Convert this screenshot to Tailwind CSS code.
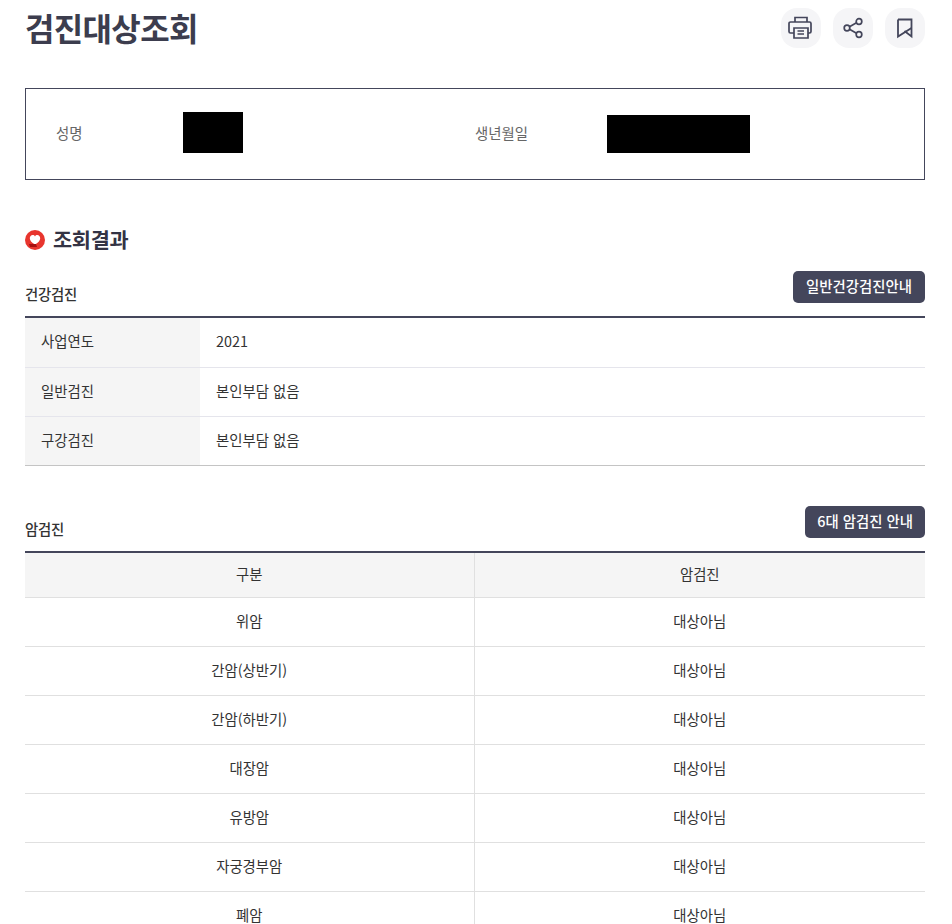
<!DOCTYPE html>
<html lang="ko">

<head>
    <meta charset="UTF-8">
    <meta name="viewport" content="width=device-width, initial-scale=1.0">
    <title>검진대상조회</title>
    <script src="https://cdn.jsdelivr.net/npm/@tailwindcss/browser@4"></script>
</head>

<body class="bg-white text-[#333] font-['Noto_Sans_CJK_KR','Noto_Sans',sans-serif] overflow-hidden h-[924px]">
    <div class="w-[900px] ml-[25px]">
        <!-- Title -->
        <div class="flex justify-between items-start h-[88px] pt-2">
            <h1 class="text-[32px] leading-[42px] -mt-[2px] font-bold tracking-[-0.65px] text-[#3c3d4e]">검진대상조회</h1>
            <div class="flex gap-3">
                <button class="w-10 h-10 rounded-2xl bg-[#f5f5f7] flex items-center justify-center">
                    <svg width="24" height="24" viewBox="0 0 24 24" fill="none" stroke="#44465b" stroke-width="1.7" class="-ml-[2px]">
                        <path d="M7 6V1.500h12V6" />
                        <path d="M6 17H2.500A1.500 1.500 0 0 1 1 15.500V7.500A1.500 1.500 0 0 1 2.500 6h19A1.500 1.500 0 0 1 23 7.500v8a1.500 1.500 0 0 1-1.500 1.500H20" />
                        <path d="M6 12h14v10H6z" />
                        <path d="M9.500 15H16M9.500 18H16" />
                    </svg>
                </button>
                <button class="w-10 h-10 rounded-2xl bg-[#f5f5f7] flex items-center justify-center">
                    <svg width="24" height="24" viewBox="0 0 24 24" fill="none" stroke="#44465b" stroke-width="1.7">
                        <circle cx="18" cy="5.500" r="2.800" />
                        <circle cx="6" cy="12" r="2.800" />
                        <circle cx="18" cy="18.500" r="2.800" />
                        <path d="M8.500 10.700l7-3.900M8.500 13.300l7 3.900" />
                    </svg>
                </button>
                <button class="w-10 h-10 rounded-2xl bg-[#f5f5f7] flex items-center justify-center">
                    <svg width="24" height="24" viewBox="0 0 24 24" fill="none" stroke="#44465b" stroke-width="1.800">
                        <path d="M5 3.500H18.500V20.500L11.500 15" />
                        <path d="M5 3.500V20.500L18.500 12" />
                    </svg>
                </button>
            </div>
        </div>

        <!-- Person info -->
        <div class="grid grid-cols-2 items-center h-[92px] pb-[4px] border border-[#44465b] text-[14.4px] text-[#666]">
            <div class="flex items-center pl-[30px]">
                <span class="w-[127px] mt-[1px]">성명</span>
                <div class="w-[60px] h-[41px] bg-black"></div>
            </div>
            <div class="flex items-center">
                <span class="w-[132px] mt-[1px]">생년월일</span>
                <div class="w-[143px] h-[38px] mt-[3px] bg-black"></div>
            </div>
        </div>

        <!-- Result heading -->
        <div class="flex items-center gap-[8px] mt-[44px] h-[32px]">
            <svg width="20" height="20" viewBox="0 0 20 20">
                <circle cx="10" cy="10" r="10" fill="#e8352e" />
                <path d="M10 14.500C6.500 12.500 4.800 10.500 4.800 8.300 4.800 6.400 6.100 5 7.700 5c1 0 1.800.5 2.300 1.400.5-.9 1.300-1.400 2.300-1.400 1.600 0 2.900 1.400 2.900 3.300 0 2.200-1.700 4.200-5.200 6.200z" fill="#fff" />
                <path d="M4 14h7l1 3H5z" fill="#a50f0f" />
            </svg>
            <h2 class="text-[20.8px] font-bold leading-[32px] -mt-[2px] tracking-[-0.3px] text-[#333344]">조회결과</h2>
        </div>

        <!-- Health checkup -->
        <div class="flex justify-between items-end h-[44px] mt-[16px]">
            <h3 class="text-[14.4px] font-medium text-[#333] leading-[20px] mb-[12px] tracking-[-0.2px]">건강검진</h3>
            <a class="h-8 px-[13px] rounded-[5px] bg-[#44465b] text-white text-[14.4px] font-medium leading-[30px] mb-[13px]">일반건강검진안내</a>
        </div>
        <table class="w-full table-fixed border-t-2 border-b border-t-[#44465b] border-b-[#c4c4c4] text-[14.4px] text-[#333] [&_td]:pb-[2px] [&_th]:pb-[2px]">
            <tbody>
                <tr class="h-[50px] border-b border-[#e5e5ec]">
                    <th class="w-[175px] pl-4 text-left font-normal bg-[#f5f5f5]">사업연도</th>
                    <td class="pl-4">2021</td>
                </tr>
                <tr class="h-[49px] border-b border-[#e5e5ec]">
                    <th class="pl-4 text-left font-normal bg-[#f5f5f5]">일반검진</th>
                    <td class="pl-4">본인부담 없음</td>
                </tr>
                <tr class="h-[49px]">
                    <th class="pl-4 text-left font-normal bg-[#f5f5f5]">구강검진</th>
                    <td class="pl-4">본인부담 없음</td>
                </tr>
            </tbody>
        </table>

        <!-- Cancer checkup -->
        <div class="flex justify-between items-end h-[45px] mt-[40px]">
            <h3 class="text-[14.4px] font-medium text-[#333] leading-[20px] mb-[12px] tracking-[-0.2px]">암검진</h3>
            <a class="h-8 px-[12px] rounded-[5px] bg-[#44465b] text-white text-[14.4px] font-medium leading-[30px] mb-[13px]">6대 암검진 안내</a>
        </div>
        <table class="w-full table-fixed border-t-2 border-t-[#44465b] text-[14.4px] text-[#333] text-center [&_td]:pb-[2px] [&_th]:pb-[2px]">
            <thead>
                <tr class="h-[46px] bg-[#f5f5f5] border-b border-[#e0e0e0]">
                    <th class="w-[449px] font-normal border-r border-[#e0e0e0]">구분</th>
                    <th class="font-normal">암검진</th>
                </tr>
            </thead>
            <tbody>
                <tr class="h-[49px] border-b border-[#e0e0e0]">
                    <td class="border-r border-[#e0e0e0]">위암</td>
                    <td>대상아님</td>
                </tr>
                <tr class="h-[49px] border-b border-[#e0e0e0]">
                    <td class="border-r border-[#e0e0e0]">간암(상반기)</td>
                    <td>대상아님</td>
                </tr>
                <tr class="h-[49px] border-b border-[#e0e0e0]">
                    <td class="border-r border-[#e0e0e0]">간암(하반기)</td>
                    <td>대상아님</td>
                </tr>
                <tr class="h-[49px] border-b border-[#e0e0e0]">
                    <td class="border-r border-[#e0e0e0]">대장암</td>
                    <td>대상아님</td>
                </tr>
                <tr class="h-[49px] border-b border-[#e0e0e0]">
                    <td class="border-r border-[#e0e0e0]">유방암</td>
                    <td>대상아님</td>
                </tr>
                <tr class="h-[49px] border-b border-[#e0e0e0]">
                    <td class="border-r border-[#e0e0e0]">자궁경부암</td>
                    <td>대상아님</td>
                </tr>
                <tr class="h-[49px] border-b border-[#e0e0e0]">
                    <td class="border-r border-[#e0e0e0]">폐암</td>
                    <td>대상아님</td>
                </tr>
            </tbody>
        </table>
    </div>
</body>

</html>
